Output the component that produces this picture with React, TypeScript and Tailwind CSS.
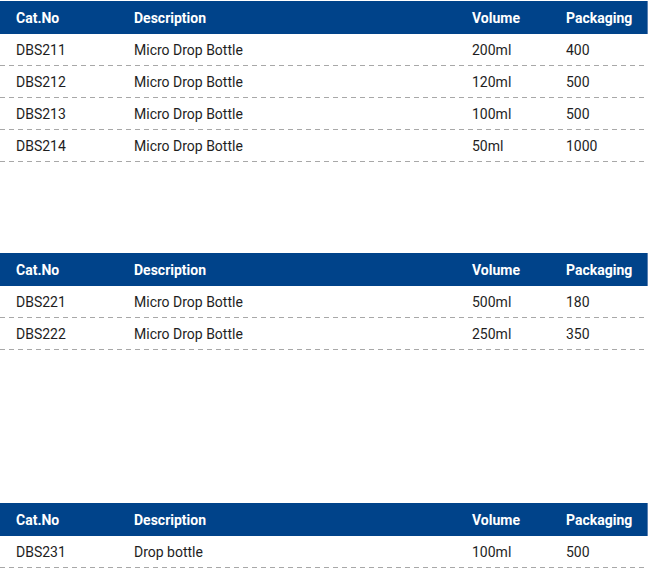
const tables = [
  [
    { cat: 'DBS211', desc: 'Micro Drop Bottle', vol: '200ml', pack: '400' },
    { cat: 'DBS212', desc: 'Micro Drop Bottle', vol: '120ml', pack: '500' },
    { cat: 'DBS213', desc: 'Micro Drop Bottle', vol: '100ml', pack: '500' },
    { cat: 'DBS214', desc: 'Micro Drop Bottle', vol: '50ml', pack: '1000' },
  ],
  [
    { cat: 'DBS221', desc: 'Micro Drop Bottle', vol: '500ml', pack: '180' },
    { cat: 'DBS222', desc: 'Micro Drop Bottle', vol: '250ml', pack: '350' },
  ],
  [{ cat: 'DBS231', desc: 'Drop bottle', vol: '100ml', pack: '500' }],
];

function Row({ cells, head }: { cells: string[]; head?: boolean }) {
  return (
    <div className={`flex items-center ${head ? 'h-[33px] pt-[2px] font-bold text-white' : 'h-[31px] pt-[2px] text-[#1e1e1e]'}`}>
      <div className="w-[134px] pl-4">{cells[0]}</div>
      <div className="w-[338px]">{cells[1]}</div>
      <div className="w-[94px]">{cells[2]}</div>
      <div className="flex-1">{cells[3]}</div>
    </div>
  );
}

export default function App() {
  return (
    <div className="bg-white pt-[1px] w-[657px] h-[571px] overflow-hidden text-[14px]" style={{ fontFamily: 'Roboto, "Liberation Sans", sans-serif' }}>
      {tables.map((rows, i) => (
        <div key={i} className={`w-[648px] ${i === 0 ? 'h-[252px]' : 'h-[250px]'}`}>
          <div className="bg-[#00438a] border-r border-[#5b82b3]">
            <Row head cells={['Cat.No', 'Description', 'Volume', 'Packaging']} />
          </div>
          {rows.map(r => (
            <div key={r.cat}>
              <Row cells={[r.cat, r.desc, r.vol, r.pack]} />
              <div className="h-px bg-[linear-gradient(to_right,#a8a8a8_60%,transparent_0)] bg-[length:9px_1px]" />
            </div>
          ))}
        </div>
      ))}
    </div>
  );
}
